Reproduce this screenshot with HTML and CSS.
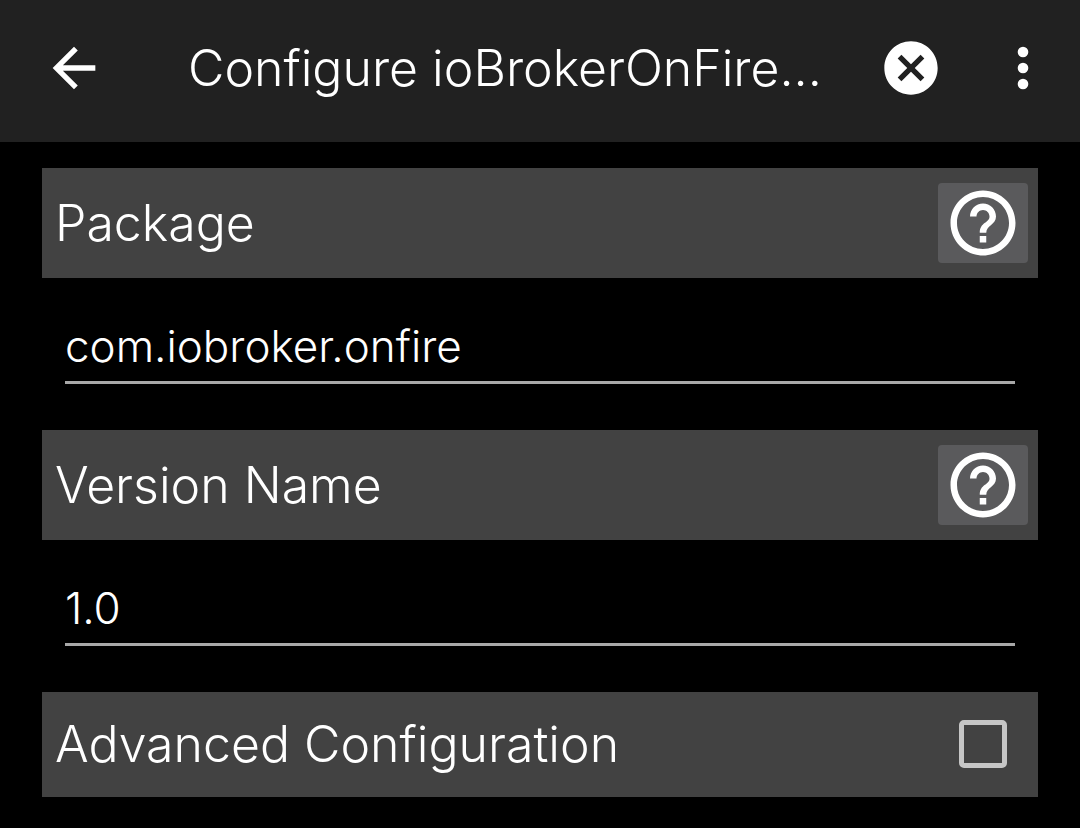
FILE: index.html
```
<!DOCTYPE html>
<html lang="en">
<head>
<meta charset="utf-8">
<meta name="viewport" content="width=device-width, initial-scale=1">
<title>Configure ioBrokerOnFire</title>
<link rel="stylesheet" href="styles.css">
</head>
<body>
<header class="toolbar">
  <button class="tool" type="button" aria-label="Back">
    <svg class="icon" viewBox="0 0 24 24" fill="currentColor"><path d="M20 11H7.830l5.590-5.590L12 4l-8 8 8 8 1.410-1.410L7.830 13H20v-2z"/></svg>
  </button>
  <h1 class="title">Configure ioBrokerOnFire...</h1>
  <button class="tool" type="button" aria-label="Cancel">
    <svg class="icon" viewBox="0 0 24 24" fill="currentColor"><path d="M12 2C6.470 2 2 6.470 2 12s4.470 10 10 10 10-4.470 10-10S17.530 2 12 2zm5 13.590L15.590 17 12 13.410 8.410 17 7 15.590 10.590 12 7 8.410 8.410 7 12 10.590 15.590 7 17 8.410 13.410 12 17 15.590z"/></svg>
  </button>
  <button class="tool" type="button" aria-label="More options">
    <svg class="icon" viewBox="0 0 24 24" fill="currentColor"><circle cx="12" cy="6" r="2"/><circle cx="12" cy="12" r="2"/><circle cx="12" cy="18" r="2"/></svg>
  </button>
</header>
<main class="form">
  <section class="group">
    <div class="bar">
      <label class="label" for="package">Package</label>
      <button class="help" type="button" aria-label="Help for Package">
        <svg class="help-icon" viewBox="0 0 24 24" fill="currentColor"><path d="M11 18h2v-2h-2v2zm1-16C6.480 2 2 6.480 2 12s4.480 10 10 10 10-4.480 10-10S17.520 2 12 2zm0 18c-4.410 0-8-3.590-8-8s3.590-8 8-8 8 3.590 8 8-3.590 8-8 8zm0-14c-2.210 0-4 1.790-4 4h2c0-1.100.9-2 2-2s2 .9 2 2c0 2-3 1.750-3 5h2c0-2.250 3-2.500 3-5 0-2.210-1.790-4-4-4z"/></svg>
      </button>
    </div>
    <div class="entry"><input class="field" id="package" type="text" value="com.iobroker.onfire" spellcheck="false"></div>
  </section>
  <section class="group">
    <div class="bar">
      <label class="label" for="version">Version Name</label>
      <button class="help" type="button" aria-label="Help for Version Name">
        <svg class="help-icon" viewBox="0 0 24 24" fill="currentColor"><path d="M11 18h2v-2h-2v2zm1-16C6.480 2 2 6.480 2 12s4.480 10 10 10 10-4.480 10-10S17.520 2 12 2zm0 18c-4.410 0-8-3.590-8-8s3.590-8 8-8 8 3.590 8 8-3.590 8-8 8zm0-14c-2.210 0-4 1.790-4 4h2c0-1.100.9-2 2-2s2 .9 2 2c0 2-3 1.750-3 5h2c0-2.250 3-2.500 3-5 0-2.210-1.790-4-4-4z"/></svg>
      </button>
    </div>
    <div class="entry"><input class="field" id="version" type="text" value="1.0" spellcheck="false"></div>
  </section>
  <section class="bar bar-check">
    <label class="label" for="advanced">Advanced Configuration</label>
    <input class="check" id="advanced" type="checkbox">
  </section>
</main>
</body>
</html>
```
FILE: styles.css
```
* { box-sizing: border-box; }
body {
  margin: 0;
  background: #000;
  color: #fff;
  font-family: Inter, "Liberation Sans", Arial, sans-serif;
  font-weight: 300;
}
button { border: 0; padding: 0; color: inherit; font: inherit; }
.toolbar {
  display: flex;
  align-items: center;
  gap: 48px;
  padding: 36px 25px 42px 42px;
  background: #212121;
}
.tool { flex: none; width: 64px; height: 64px; background: none; }
.icon { display: block; width: 64px; height: 64px; }
.title {
  flex: 1;
  min-width: 0;
  margin: 0 0 0 34px;
  font-size: 50px;
  font-weight: 300;
  line-height: 64px;
  white-space: nowrap;
}
.form { padding: 26px 42px; }
.bar {
  display: flex;
  align-items: center;
  justify-content: space-between;
  padding: 15px 10px 15px 13px;
  background: #424242;
}
.label { font-size: 50px; line-height: 64px; }
.help {
  display: flex;
  align-items: center;
  justify-content: center;
  width: 90px;
  height: 80px;
  border-radius: 4px;
  background: #5a5a5c;
}
.help-icon { width: 78px; height: 78px; }
.entry { padding: 32px 23px 46px; }
.field {
  display: block;
  width: 100%;
  height: 74px;
  padding: 0;
  border: 0;
  border-bottom: 3px solid #a8a8a8;
  border-radius: 0;
  outline: 0;
  background: none;
  color: inherit;
  font-family: inherit;
  font-weight: inherit;
  font-size: 44px;
}
.bar-check { min-height: 105px; padding: 14px 31px 15px 13px; }
.check {
  appearance: none;
  width: 48px;
  height: 48px;
  margin: 0;
  border: 5px solid #c6c6c6;
  border-radius: 5px;
}
.check:checked { background: #c6c6c6; }
```
